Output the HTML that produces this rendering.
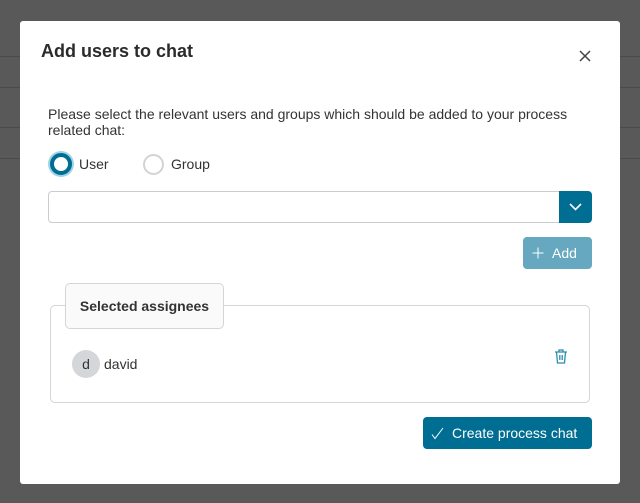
<!DOCTYPE html>
<html><head><style>
body{margin:0;width:640px;height:503px;background:#595959;font-family:"Liberation Sans",sans-serif;position:relative;overflow:hidden;color:#333}
.ln{position:absolute;left:0;width:640px;height:1px;background:#4a4a4a}
.m{position:absolute;left:20px;top:21px;width:600px;height:463px;background:#fff;border-radius:3px}
.a{position:absolute}
</style></head><body>
<div class="ln" style="top:56px"></div><div class="ln" style="top:87px"></div><div class="ln" style="top:127px"></div><div class="ln" style="top:158px"></div>
<div class="m">
<div class="a" style="left:21px;top:20px;font-size:18px;font-weight:bold;color:#2b2b2b">Add users to chat</div>
<svg class="a" style="left:559px;top:29px" width="12" height="12"><path d="M1 1L11 11M11 1L1 11" stroke="#444" stroke-width="1.5"/></svg>
<div class="a" style="left:28px;top:85px;width:540px;font-size:14px;line-height:16px;color:#333">Please select the relevant users and groups which should be added to your process related chat:</div>
<div class="a" style="left:30px;top:132px;width:14px;height:14px;border-radius:50%;border:4px solid #006e93;box-shadow:0 0 0 2px #9fd4e6;background:#fff"></div>
<div class="a" style="left:59px;top:135px;font-size:14px">User</div>
<div class="a" style="left:123px;top:133px;width:17px;height:17px;border-radius:50%;border:2px solid #d3d3d3"></div>
<div class="a" style="left:151px;top:135px;font-size:14px">Group</div>
<div class="a" style="left:28px;top:170px;width:510px;height:30px;border:1px solid #ccc;border-radius:4px 0 0 4px"></div>
<div class="a" style="left:539px;top:170px;width:33px;height:32px;background:#006e93;border-radius:0 4px 4px 0"></div>
<svg class="a" style="left:549px;top:182px" width="13" height="8"><path d="M1 1L6.5 6.5L12 1" stroke="#fff" stroke-width="1.6" fill="none"/></svg>
<div class="a" style="left:503px;top:216px;width:69px;height:32px;background:#66a8bf;border-radius:4px"></div>
<svg class="a" style="left:512px;top:226px" width="12" height="12"><path d="M6 0.5V11.5M0.5 6H11.5" stroke="#fff" stroke-width="1"/></svg>
<div class="a" style="left:532px;top:224px;color:#fff;font-size:14px">Add</div>
<div class="a" style="left:30px;top:284px;width:538px;height:96px;border:1px solid #d5d5d5;border-radius:5px"></div>
<div class="a" style="left:45px;top:262px;width:157px;height:44px;border:1px solid #d5d5d5;border-radius:5px;background:#fafafa;font-size:14px;font-weight:bold;line-height:44px;text-align:center">Selected assignees</div>
<div class="a" style="left:52px;top:329px;width:28px;height:28px;border-radius:50%;background:#d4d6da;text-align:center;line-height:28px;font-size:14px">d</div>
<div class="a" style="left:84px;top:335px;font-size:14px">david</div>
<svg class="a" style="left:534px;top:328px" width="14" height="15"><path d="M1 3H13M5 3V1H9V3M2.5 3L3.5 14H10.5L11.5 3M5.8 6V11M8.2 6V11" stroke="#2a8cae" stroke-width="1.3" fill="none"/></svg>
<div class="a" style="left:403px;top:396px;width:169px;height:32px;background:#006e93;border-radius:4px"></div>
<svg class="a" style="left:411px;top:406px" width="13" height="13"><path d="M1 7.5L4 11.5L12 1" stroke="#fff" stroke-width="1" fill="none"/></svg>
<div class="a" style="left:432px;top:404px;color:#fff;font-size:14px">Create process chat</div>
</div>
</body></html>
